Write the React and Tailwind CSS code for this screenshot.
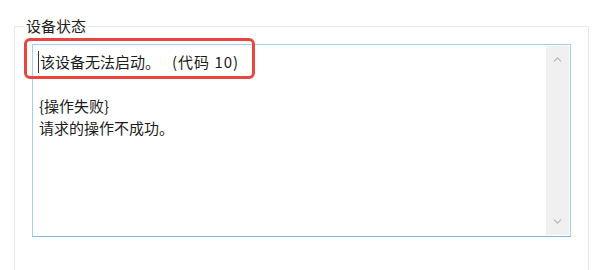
import { ChevronUp, ChevronDown } from "lucide-react";

const App = () => {
  return (
    <div
      className="w-[600px] h-[270px] bg-white overflow-hidden pt-[16px] pl-[14px] pr-[12px]"
      style={{ fontFamily: '"Microsoft YaHei UI", "Noto Sans CJK SC", "Noto Sans", sans-serif' }}
    >
      <fieldset className="border border-[#e6e6e6] border-b-0 h-[270px] px-[17px]">
        <legend className="ml-[-8px] px-[2px] text-[15px] leading-[20px] text-[#222]">设备状态</legend>

        <div className="relative mt-[8px]">
          <div className="flex h-[193px] w-[539px] border border-[#a3cdf1] border-b-[#7fb5e8]">
            <div className="flex-1 pl-[6px] pt-[6px] text-[15px] leading-[22px] text-[#1c1c1c]">
              <p className="border-l border-[#333] pl-[1px] -ml-[1px] w-fit">
                该设备无法启动。<span className="pl-[12px] tracking-[1px]">(代码 10)</span>
              </p>
              <p>&nbsp;</p>
              <p>{"{操作失败}"}</p>
              <p>请求的操作不成功。</p>
            </div>
            <div className="my-[1px] mr-[1px] w-[23px] bg-[#f0f0f0] flex flex-col justify-between items-center py-[7px]">
              <ChevronUp size={13} strokeWidth={2} className="text-[#b5b5b5]" />
              <ChevronDown size={13} strokeWidth={2} className="text-[#b5b5b5]" />
            </div>
          </div>

          <div className="absolute left-[-8px] top-[-6px] w-[231px] h-[41px] border-[3px] border-[#e8473f] rounded-[6px]"></div>
        </div>
      </fieldset>
    </div>
  );
};

export default App;
